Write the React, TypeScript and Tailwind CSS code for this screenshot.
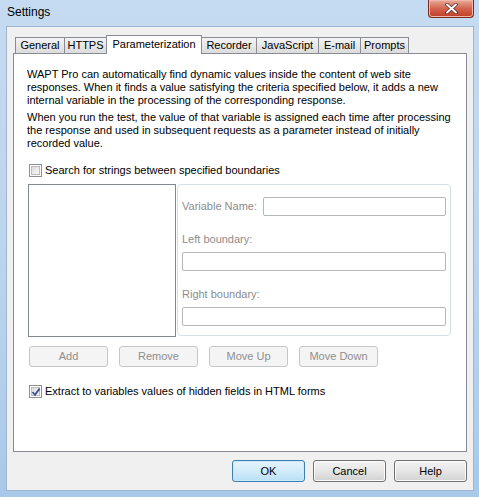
import React from 'react';

const font = { fontFamily: '"Liberation Sans", Arial, sans-serif' };

const tabs = [
  { label: 'General', w: 'w-[50px]' },
  { label: 'HTTPS', w: 'w-[43px]' },
  { label: 'Parameterization', w: 'w-[96px]', active: true },
  { label: 'Recorder', w: 'w-[56px]' },
  { label: 'JavaScript', w: 'w-[63px]' },
  { label: 'E-mail', w: 'w-[43px]' },
  { label: 'Prompts', w: 'w-[49px]' },
];

const Checkbox: React.FC<{ checked?: boolean }> = ({ checked }) => (
  <span className="relative flex h-[13px] w-[13px] items-center justify-center border border-[#8e8f8f] bg-white">
    <span className="h-[9px] w-[9px] border border-[#bcbcbc] bg-gradient-to-br from-[#dcdcdc] to-[#f8f8f8]" />
    {checked && (
      <svg className="absolute left-[1px] top-[1px]" width="10" height="10" viewBox="0 0 10 10">
        <path d="M1.5 5 L4 7.8 L8.6 1.6" fill="none" stroke="#3d5392" strokeWidth="1.8" />
      </svg>
    )}
  </span>
);

const DisabledButton: React.FC<{ label: string }> = ({ label }) => (
  <div className="flex h-[21px] w-[79px] items-center justify-center rounded-[3px] border border-[#c4c7ca] bg-[#f4f4f4] text-[#8f8f8f]">
    {label}
  </div>
);

const DialogButton: React.FC<{ label: string; primary?: boolean }> = ({ label, primary }) => (
  <div
    className={
      primary
        ? 'flex h-[22px] w-[73px] items-center justify-center rounded-[3px] border border-[#3c7fb1] bg-gradient-to-b from-[#e5f4fc] via-[#d3ecfa] to-[#b9dff6] text-black shadow-[inset_0_0_0_1px_#c9eaf9]'
        : 'flex h-[22px] w-[73px] items-center justify-center rounded-[3px] border border-[#707070] bg-gradient-to-b from-[#f2f2f2] via-[#e6e6e6] to-[#d2d2d2] text-black shadow-[inset_0_0_0_1px_#fcfcfc]'
    }
  >
    {label}
  </div>
);

const TextBox: React.FC<{ className?: string }> = ({ className }) => (
  <div className={'h-[19px] rounded-[2px] border border-[#b4b6ba] bg-white ' + (className ?? '')} />
);

export default function App() {
  return (
    <div
      className="flex h-[497px] w-[479px] flex-col overflow-hidden bg-gradient-to-b from-[#c4dbf1] via-[#bcd5ee] to-[#a9c9ea] text-[11px] leading-[13px] text-black"
      style={font}
    >
      {/* title bar */}
      <div className="relative h-[26px] shrink-0">
        <div className="pl-[7px] pt-[5px] text-[12px] leading-[15px] text-black">Settings</div>
        <div className="absolute right-[5px] top-0 flex h-[18px] w-[46px] items-center justify-center rounded-b-[4px] border border-t-0 border-[#7a2a1e] bg-gradient-to-b from-[#e9aa9a] via-[#d36450] to-[#c13b24] shadow-[inset_0_0_0_1px_#f0b8a8]">
          <svg width="13" height="11" viewBox="0 0 13 11">
            <path d="M2 1.5 L11 9.5 M11 1.5 L2 9.5" stroke="#5a2a24" strokeWidth="3.6" strokeLinecap="round" />
            <path d="M2 1.5 L11 9.5 M11 1.5 L2 9.5" stroke="#ffffff" strokeWidth="2" strokeLinecap="round" />
          </svg>
        </div>
      </div>

      {/* client area */}
      <div className="ml-[6px] h-[465px] w-[468px] shrink-0 border border-[#9eb6cf] bg-[#f0f0f0] pt-[8px]">
        <div className="ml-[6px] w-[454px]">
          {/* tabs */}
          <div className="flex h-[18px] items-end pl-[2px]">
            {tabs.map((t, i) =>
              t.active ? (
                <div
                  key={t.label}
                  className={`relative z-10 -mb-px flex h-[19px] items-center justify-center border border-b-0 border-[#898c95] bg-white pb-[2px] ${t.w} ${i ? '-ml-px' : ''}`}
                >
                  {t.label}
                </div>
              ) : (
                <div
                  key={t.label}
                  className={`flex h-[16px] items-center justify-center border border-b-0 border-[#898c95] bg-gradient-to-b from-[#f3f3f3] to-[#dcdcdc] ${t.w} ${i ? '-ml-px' : ''}`}
                >
                  {t.label}
                </div>
              )
            )}
          </div>

          {/* panel */}
          <div className="h-[399px] border border-[#898c95] bg-white pl-[13px] pt-[14px]">
            <div className="whitespace-nowrap">
              <div>WAPT Pro can automatically find dynamic values inside the content of web site</div>
              <div>responses. When it finds a value satisfying the criteria specified below, it adds a new</div>
              <div>internal variable in the processing of the corresponding response.</div>
            </div>
            <div className="mt-[4px] whitespace-nowrap">
              <div>When you run the test, the value of that variable is assigned each time after processing</div>
              <div>the response and used in subsequent requests as a parameter instead of initially</div>
              <div>recorded value.</div>
            </div>

            <div className="ml-[2px] mt-[13px] flex h-[15px] items-center gap-[3px]">
              <Checkbox />
              <span>Search for strings between specified boundaries</span>
            </div>

            <div className="ml-[1px] mt-[6px] flex">
              <div className="h-[153px] w-[148px] border border-[#828790] bg-white" />
              <div className="ml-[1px] h-[152px] w-[274px] rounded-[4px] border border-[#d5dfe5] p-[4px] text-[#8d8d8d]">
                <div className="mt-[8px] flex h-[19px] items-center">
                  <span className="w-[81px]">Variable Name:</span>
                  <TextBox className="flex-1" />
                </div>
                <div className="mt-[17px]">Left boundary:</div>
                <TextBox className="mt-[6px]" />
                <div className="mt-[17px]">Right boundary:</div>
                <TextBox className="mt-[6px]" />
              </div>
            </div>

            <div className="ml-[2px] mt-[9px] flex gap-[11px]">
              <DisabledButton label="Add" />
              <DisabledButton label="Remove" />
              <DisabledButton label="Move Up" />
              <DisabledButton label="Move Down" />
            </div>

            <div className="ml-[2px] mt-[17px] flex h-[15px] items-center gap-[3px]">
              <Checkbox checked />
              <span>Extract to variables values of hidden fields in HTML forms</span>
            </div>
          </div>

          {/* dialog buttons */}
          <div className="mt-[8px] flex justify-end gap-[8px]">
            <DialogButton label="OK" primary />
            <DialogButton label="Cancel" />
            <DialogButton label="Help" />
          </div>
        </div>
      </div>
    </div>
  );
}
